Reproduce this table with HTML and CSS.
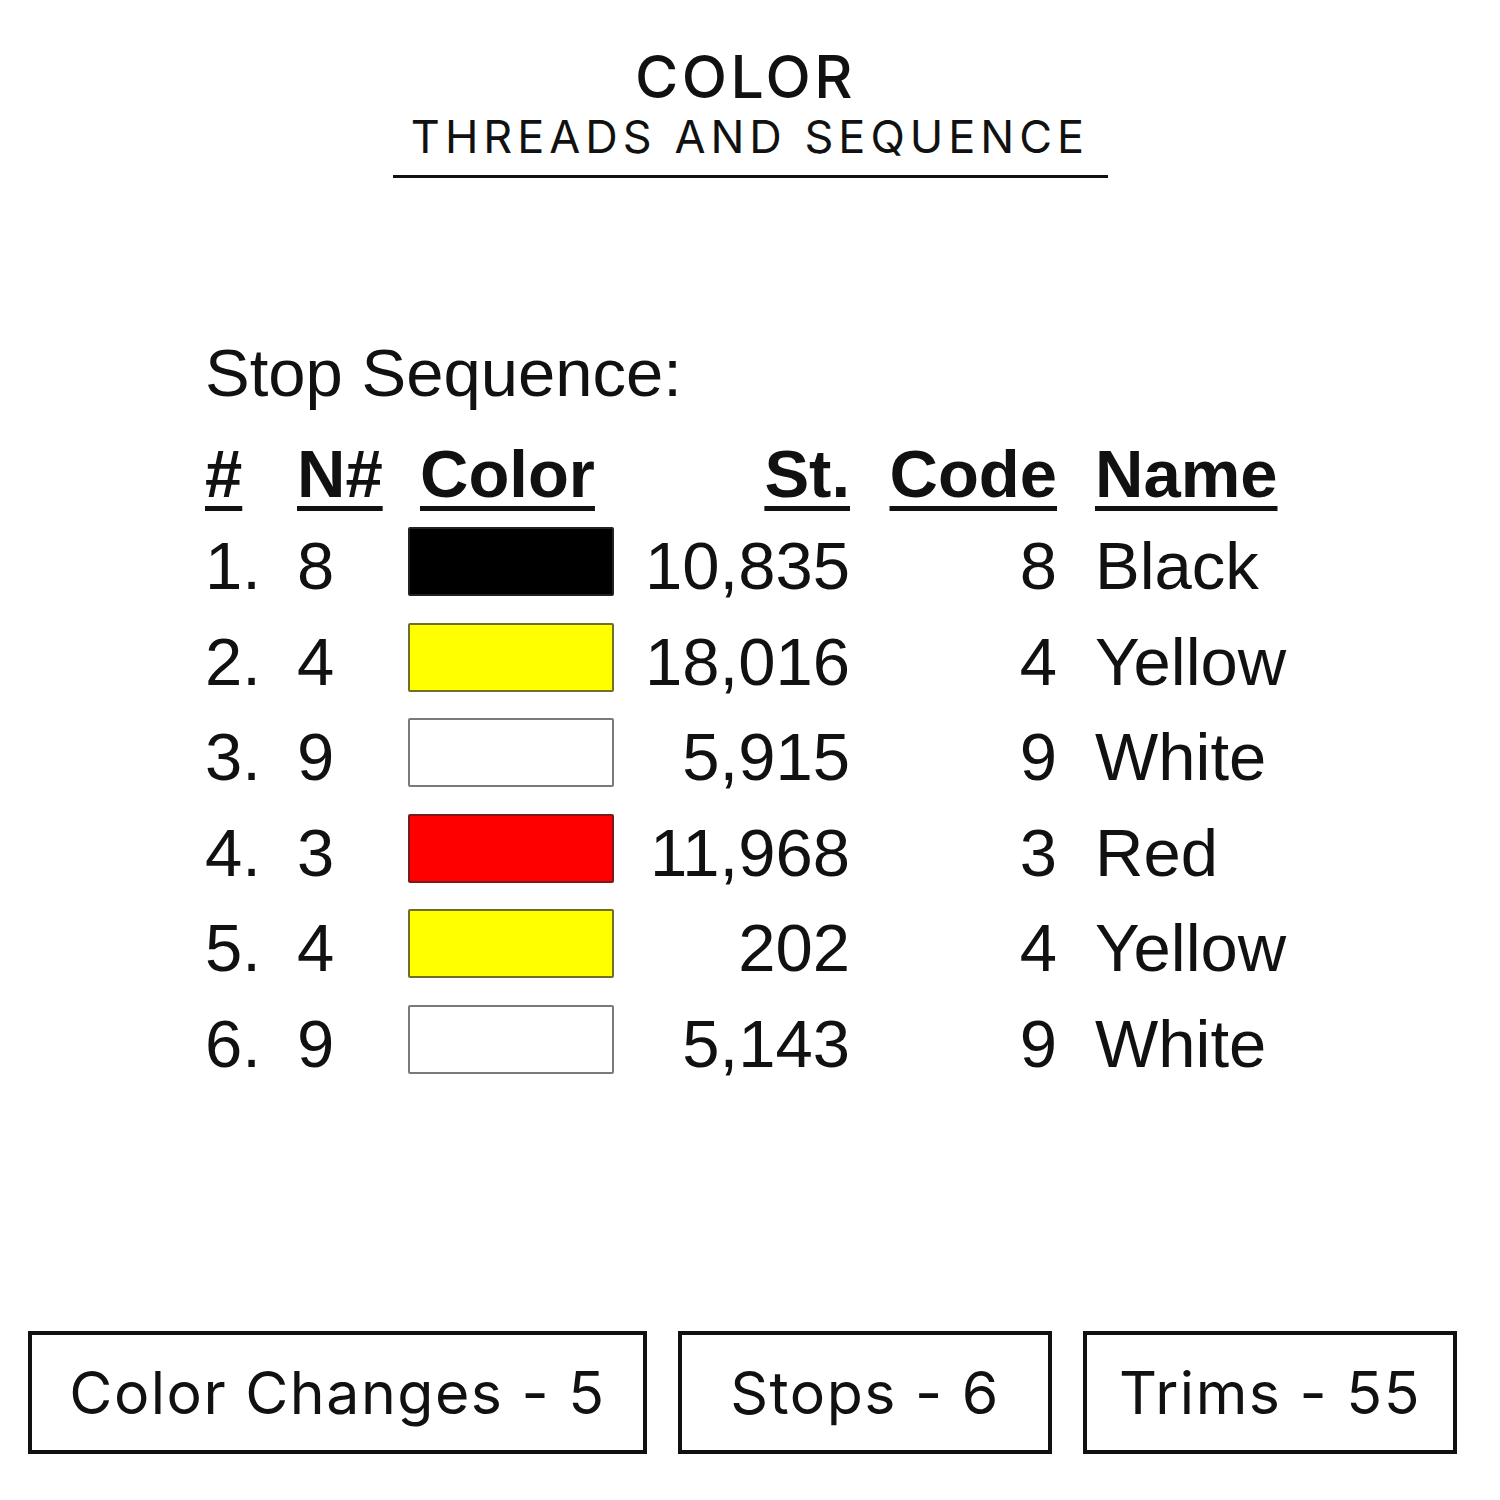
FILE: index.html
```html
<!DOCTYPE html>
<html>
<head>
<meta charset="utf-8">
<link rel="stylesheet" href="styles.css">
</head>
<body>
<div class="page">
  <header class="title">
    <div class="title-main">COLOR</div>
    <div class="title-sub">THREADS AND SEQUENCE</div>
    <div class="title-rule"></div>
  </header>

  <section class="seq">
    <div class="seq-heading">Stop Sequence:</div>
    <div class="seq-table">
      <div class="row head">
        <span class="c1"><u>#</u></span>
        <span class="c2"><u>N#</u></span>
        <span class="c3 hcolor"><u>Color</u></span>
        <span class="c4"><u>St.</u></span>
        <span class="c5"><u>Code</u></span>
        <span class="c6"><u>Name</u></span>
      </div>
      <div class="row">
        <span class="c1">1.</span><span class="c2">8</span>
        <span class="c3"><i class="sw sw-black"></i></span>
        <span class="c4">10,835</span><span class="c5">8</span><span class="c6">Black</span>
      </div>
      <div class="row">
        <span class="c1">2.</span><span class="c2">4</span>
        <span class="c3"><i class="sw sw-yellow"></i></span>
        <span class="c4">18,016</span><span class="c5">4</span><span class="c6">Yellow</span>
      </div>
      <div class="row">
        <span class="c1">3.</span><span class="c2">9</span>
        <span class="c3"><i class="sw sw-white"></i></span>
        <span class="c4">5,915</span><span class="c5">9</span><span class="c6">White</span>
      </div>
      <div class="row">
        <span class="c1">4.</span><span class="c2">3</span>
        <span class="c3"><i class="sw sw-red"></i></span>
        <span class="c4">11,968</span><span class="c5">3</span><span class="c6">Red</span>
      </div>
      <div class="row">
        <span class="c1">5.</span><span class="c2">4</span>
        <span class="c3"><i class="sw sw-yellow"></i></span>
        <span class="c4">202</span><span class="c5">4</span><span class="c6">Yellow</span>
      </div>
      <div class="row">
        <span class="c1">6.</span><span class="c2">9</span>
        <span class="c3"><i class="sw sw-white"></i></span>
        <span class="c4">5,143</span><span class="c5">9</span><span class="c6">White</span>
      </div>
    </div>
  </section>

  <section class="stats">
    <div class="stat stat-wide">Color Changes - 5</div>
    <div class="stat">Stops - 6</div>
    <div class="stat">Trims - 55</div>
  </section>
</div>
</body>
</html>
```

FILE: styles.css
```css
* { box-sizing: border-box; }
html, body { margin: 0; padding: 0; background: #fff; }
.page {
  width: 1500px;
  height: 1500px;
  color: #111;
  overflow: hidden;
}

.title {
  display: flex;
  flex-direction: column;
  align-items: center;
  padding-top: 46px;
  font-family: Inter, "Open Sans", sans-serif;
}
.title-main {
  font-size: 59px;
  font-weight: 500;
  line-height: 62px;
  letter-spacing: 3.5px;
  padding-left: 3px;
  margin-right: 12px;
}
.title-sub {
  font-size: 45px;
  font-weight: 400;
  line-height: 54px;
  letter-spacing: 5px;
  margin-top: 2px;
}
.title-rule {
  width: 715px;
  height: 3px;
  background: #111;
  margin-top: 11px;
}

.seq {
  padding-left: 205px;
  margin-top: 155px;
  font-family: "Liberation Sans", Arial, sans-serif;
  font-size: 67px;
}
.seq-heading {
  line-height: 80px;
}
.seq-table {
  margin-top: 13px;
}
.row {
  display: grid;
  grid-template-columns: 92px 111px 206px 236px 207px auto;
  height: 95.5px;
  line-height: 95.5px;
  white-space: nowrap;
}
.row.head {
  height: 92px;
  font-weight: 700;
}
.row u {
  text-decoration-thickness: 5px;
  text-underline-offset: 9px;
}
.c4, .c5 { text-align: right; }
.c6 { padding-left: 38px; }
.hcolor { padding-left: 12px; }
.c3 { display: flex; align-items: flex-start; }
.sw {
  display: block;
  width: 206px;
  height: 69px;
  margin-top: 9px;
  border: 2px solid #7a7a7a;
  border-radius: 2px;
}
.sw-black { background: #000; border-color: #222; }
.sw-yellow { background: #ffff00; border-color: #6f6f2a; }
.sw-white { background: #fff; border-color: #7a7a7a; }
.sw-red { background: #ff0000; border-color: #7a1a1a; }

.stats {
  display: flex;
  gap: 31px;
  padding-left: 28px;
  margin-top: 240px;
  font-family: Inter, "Open Sans", sans-serif;
}
.stat {
  width: 374px;
  height: 123px;
  border: 4px solid #111;
  display: flex;
  align-items: center;
  justify-content: center;
  font-size: 59px;
  font-weight: 400;
  letter-spacing: 1.5px;
}
.stat-wide { width: 619px; }
```
